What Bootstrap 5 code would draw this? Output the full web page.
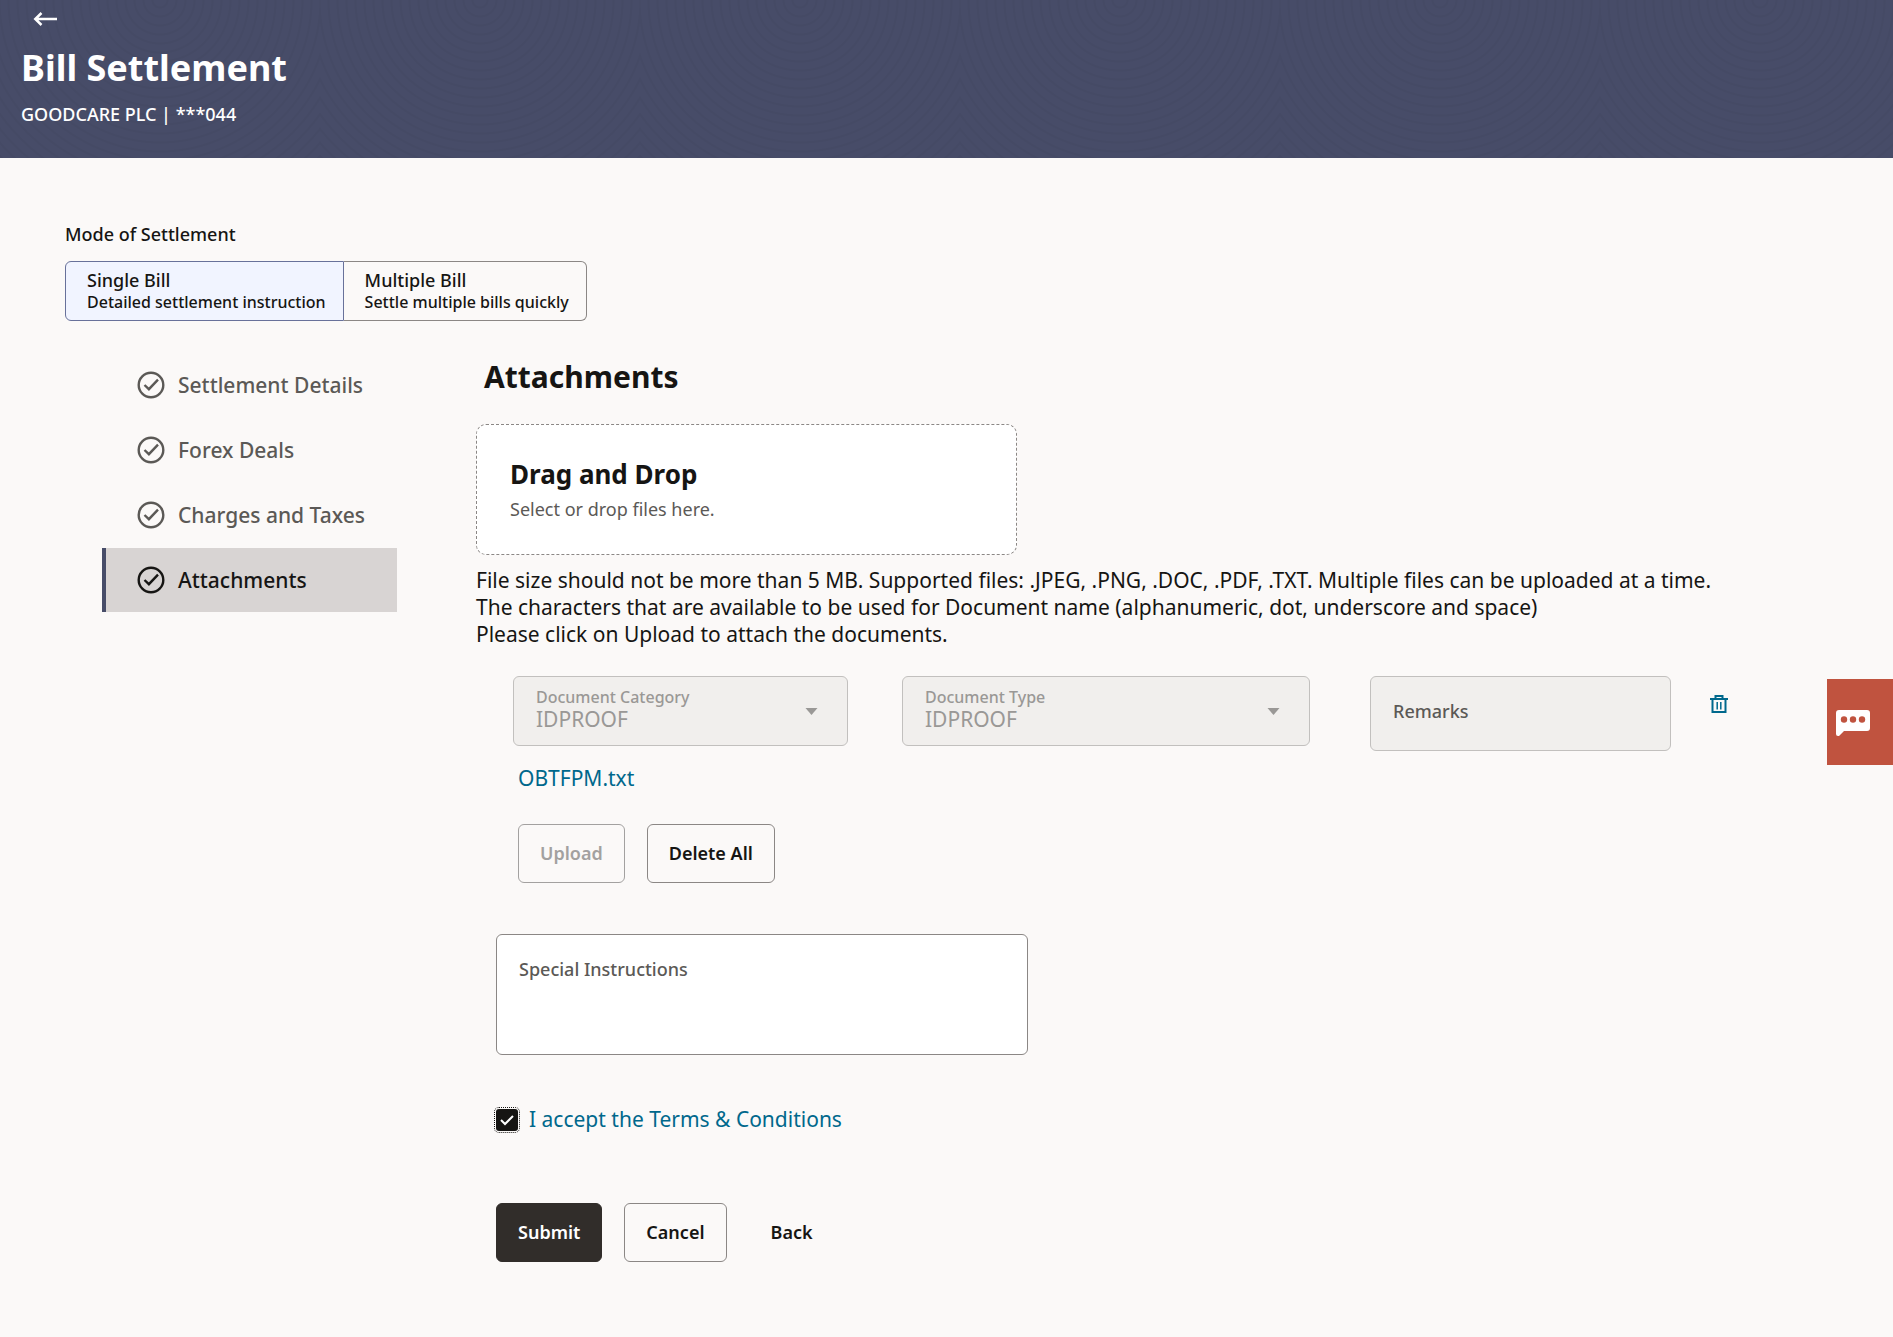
<!DOCTYPE html>
<html lang="en">
<head>
<meta charset="utf-8">
<meta name="viewport" content="width=device-width, initial-scale=1">
<title>Bill Settlement</title>
<link href="https://cdn.jsdelivr.net/npm/bootstrap@5.3.0/dist/css/bootstrap.min.css" rel="stylesheet">
<style>
:root { --ink: #161513; --muted-ink: #5b5956; --faint: #9a9896; --brand: #474c68; --link: #00688c; --line: #8b8785; --font-page: "Noto Sans", "Open Sans", sans-serif; }
body { font-family: var(--font-page); font-size: 21px; line-height: 27px; color: var(--ink); background: #fbf9f8; }
a { color: var(--link); text-decoration: none; }

.page-header { color: #fff; padding: 8px 21px 32px; background-color: var(--brand);
  background-image: repeating-radial-gradient(circle at 50% 0, transparent 0 6px, rgba(0, 0, 0, .03) 7px 8px, transparent 9px); background-size: 320px 158px; }
.back-link { height: 22px; margin: 0 0 18px 12px; }
.page-title { font-size: 36px; line-height: 40px; font-weight: 700; margin-bottom: 14px; }
.party { font-size: 18px; line-height: 24px; font-weight: 500; }

.page-main { padding: 64px 0 64px 65px; }
.text-label { font-size: 18px; line-height: 24px; font-weight: 500; }
.mode-label { margin-bottom: 15px; }

.mode-option { border: 1px solid var(--line); padding: 7px 17px 7px 21px; font-size: 18px; line-height: 22px; font-weight: 500; cursor: pointer; }
.mode-option small { display: block; font-size: 16px; font-weight: 500; }
.mode-option.first { border-radius: 6px 0 0 6px; }
.mode-option.last { border-radius: 0 6px 6px 0; border-left: 0; }
.btn-check:checked + .mode-option { background: #f1f4ff; border-color: #68719a; }

.layout-row { margin-top: 32px; }
.steps { width: 295px; margin: 0 79px 0 37px; }
.step { display: flex; align-items: center; gap: 13px; height: 64px; margin-bottom: 1px; padding-left: 31px; border-left: 4px solid transparent; color: var(--muted-ink); font-weight: 500; }
.step.active { background: #d8d4d3; border-left-color: var(--brand); color: var(--ink); }

.section-title { font-size: 30px; line-height: 36px; font-weight: 700; margin: 6px 0 29px 8px; }
.drop-zone { width: 541px; max-width: 100%; padding: 33px; background: #fff; border: 1px dashed var(--line); border-radius: 10px; }
.drop-zone h3 { font-size: 26px; line-height: 32px; font-weight: 700; margin-bottom: 7px; }
.drop-zone p { font-size: 18px; line-height: 24px; color: var(--muted-ink); }
.notes { margin-top: 12px; }

.doc-row { margin: 28px 164px 0 37px; min-height: 75px; }
.doc-category { flex: 335 1 0; margin-right: 54px; }
.doc-type { flex: 408 1 0; margin-right: 60px; }
.doc-remarks { flex: 301 1 0; margin-right: 38px; }
.trash-btn { border: 0; background: none; padding: 0; height: 24px; margin-top: 16px; color: var(--link); }

.form-floating > .form-select.field { height: 70px; min-height: 70px; padding: 27px 50px 11px 22px; font-size: 21px; line-height: 28px; color: var(--faint); opacity: 1; background-color: #f1efed; border: 1px solid #c2c0be; border-radius: 6px;
  background-image: url("data:image/svg+xml,%3csvg xmlns='http://www.w3.org/2000/svg' viewBox='0 0 12 7'%3e%3cpath fill='%239a9896' d='M0 0h12L6 7z'/%3e%3c/svg%3e"); background-size: 13px 7px; background-position: right 29px center; }
.form-floating > .form-select.field ~ label { font-size: 16px; line-height: 22px; font-weight: 500; color: var(--faint); opacity: 1; transform: none; height: auto; padding: 9px 22px 0; }
.form-floating > .form-control.field { border-radius: 6px; color: var(--ink); padding: 30px 22px 8px; font-size: 21px; }
.form-floating > .form-control.field ~ label { font-size: 18px; line-height: 24px; font-weight: 500; color: var(--muted-ink); opacity: 1; padding: 22px 22px 0; height: auto; }
.form-floating > input.form-control.field { height: 75px; min-height: 75px; background: #f1efed; border: 1px solid #c2c0be; }
.form-floating > textarea.form-control.field { height: 121px; background: #fff; border: 1px solid var(--line); resize: none; }

.file-link { margin: 13px 0 32px 42px; line-height: 28px; }
.upload-actions { margin-left: 42px; gap: 22px; }
.action { --bs-btn-font-size: 18px; --bs-btn-font-weight: 600; --bs-btn-padding-x: 21px; --bs-btn-padding-y: 16px; --bs-btn-line-height: 25px; --bs-btn-border-radius: 6px; --bs-btn-border-color: var(--line); --bs-btn-color: var(--ink); --bs-btn-disabled-color: #a3a1a0; --bs-btn-disabled-border-color: #a3a1a0; --bs-btn-disabled-opacity: 1; font-family: inherit; }
.action.main-action { --bs-btn-color: #fff; --bs-btn-bg: #312d2a; --bs-btn-border-color: #312d2a; }
.action.plain-action { --bs-btn-border-color: transparent; }

.instructions { width: 532px; max-width: 100%; margin: 51px 0 51px 20px; }
.terms { margin: 0 0 70px 20px; }
.terms .form-check-input { width: 22px; height: 22px; margin: 0 11px 0 0; border: 0; border-radius: 3px; outline: 1px dotted var(--ink); outline-offset: 1px; }
.terms .form-check-input:checked { background-color: var(--ink); background-size: 18px; background-image: url("data:image/svg+xml,%3csvg xmlns='http://www.w3.org/2000/svg' viewBox='0 0 18 18'%3e%3cpath fill='none' stroke='%23fff' stroke-width='2' d='M3 9l4 4 8-8'/%3e%3c/svg%3e"); }
.form-actions { margin-left: 20px; gap: 22px; }

.chat-tab { position: fixed; right: 0; top: 54%; transform: translateY(-50%); width: 66px; height: 86px; border: 0; padding: 0 0 0 9px; text-align: left; background: #c0533f; }
</style>
</head>
<body>
<header class="page-header">
  <div class="d-flex">
    <a class="back-link d-flex align-items-center" href="#" aria-label="Go back">
      <svg width="24" height="14" viewBox="0 0 24 14" fill="none" stroke="#fff" stroke-width="2.500"><path d="M2 7h22M8.500 1 2.300 7l6.200 6"/></svg>
    </a>
  </div>
  <h1 class="page-title">Bill Settlement</h1>
  <div class="party">GOODCARE PLC | ***044</div>
</header>

<main class="page-main">
  <div class="text-label mode-label" id="modeLabel">Mode of Settlement</div>
  <div class="d-flex" role="group" aria-labelledby="modeLabel">
    <input class="btn-check" type="radio" name="mode" id="single" checked>
    <label class="mode-option first" for="single">Single Bill<small>Detailed settlement instruction</small></label>
    <input class="btn-check" type="radio" name="mode" id="multiple">
    <label class="mode-option last" for="multiple">Multiple Bill<small>Settle multiple bills quickly</small></label>
  </div>

  <svg class="d-none" aria-hidden="true"><symbol id="done" viewBox="0 0 28 28"><g fill="none" stroke="currentColor" stroke-width="2.400"><circle cx="14" cy="14" r="12.300"/><path d="M7.500 14 11.900 18.200 21 8.600"/></g></symbol></svg>

  <div class="d-flex layout-row">
    <nav class="steps flex-shrink-0" aria-label="Steps">
      <a class="step" href="#"><svg width="28" height="28"><use href="#done"/></svg>Settlement Details</a>
      <a class="step" href="#"><svg width="28" height="28"><use href="#done"/></svg>Forex Deals</a>
      <a class="step" href="#"><svg width="28" height="28"><use href="#done"/></svg>Charges and Taxes</a>
      <a class="step active" href="#" aria-current="step"><svg width="28" height="28"><use href="#done"/></svg>Attachments</a>
    </nav>

    <section class="flex-grow-1">
      <h2 class="section-title">Attachments</h2>
      <div class="drop-zone">
        <h3>Drag and Drop</h3>
        <p class="mb-0">Select or drop files here.</p>
      </div>
      <div class="notes">
        <div>File size should not be more than 5 MB. Supported files: .JPEG, .PNG, .DOC, .PDF, .TXT. Multiple files can be uploaded at a time.</div>
        <div>The characters that are available to be used for Document name (alphanumeric, dot, underscore and space)</div>
        <div>Please click on Upload to attach the documents.</div>
      </div>

      <div class="d-flex align-items-start doc-row">
        <div class="form-floating doc-category">
          <select class="form-select field" id="category" disabled><option>IDPROOF</option></select>
          <label for="category">Document Category</label>
        </div>
        <div class="form-floating doc-type">
          <select class="form-select field" id="type" disabled><option>IDPROOF</option></select>
          <label for="type">Document Type</label>
        </div>
        <div class="form-floating doc-remarks">
          <input class="form-control field" type="text" id="remarks" placeholder="Remarks">
          <label for="remarks">Remarks</label>
        </div>
        <button class="trash-btn d-flex align-items-center" type="button" aria-label="Delete">
          <svg width="20" height="20" viewBox="0 0 20 20" fill="none" stroke="currentColor" stroke-width="2"><path d="M1 5h18M6.500 5V2h7v3M3.500 5v13h13V5"/><path stroke-width="1.500" d="M8.200 8v7.500M11.800 8v7.500"/></svg>
        </button>
      </div>

      <div class="d-flex"><a class="file-link" href="#">OBTFPM.txt</a></div>
      <div class="d-flex upload-actions">
        <button class="btn action" type="button" disabled>Upload</button>
        <button class="btn action" type="button">Delete All</button>
      </div>

      <div class="form-floating instructions">
        <textarea class="form-control field" id="instructions" placeholder="Special Instructions"></textarea>
        <label for="instructions">Special Instructions</label>
      </div>

      <div class="d-flex align-items-center terms">
        <input class="form-check-input" type="checkbox" id="accept" checked>
        <label for="accept"><a href="#">I accept the Terms &amp; Conditions</a></label>
      </div>

      <div class="d-flex form-actions">
        <button class="btn action main-action" type="submit">Submit</button>
        <button class="btn action" type="button">Cancel</button>
        <button class="btn action plain-action" type="button">Back</button>
      </div>
    </section>
  </div>
</main>

<button class="chat-tab" type="button" aria-label="Chat">
  <svg width="34" height="26" viewBox="0 0 34 26"><path fill="#fff" d="M3 0h28a3 3 0 0 1 3 3v15a3 3 0 0 1-3 3H8l-5 5H2a2 2 0 0 1-2-2V3a3 3 0 0 1 3-3z"/><g fill="#c0533f"><circle cx="8" cy="9.500" r="3.200"/><circle cx="17" cy="9.500" r="3.200"/><circle cx="26" cy="9.500" r="3.200"/></g></svg>
</button>
<script src="https://cdn.jsdelivr.net/npm/bootstrap@5.3.0/dist/js/bootstrap.bundle.min.js"></script>
</body>
</html>
